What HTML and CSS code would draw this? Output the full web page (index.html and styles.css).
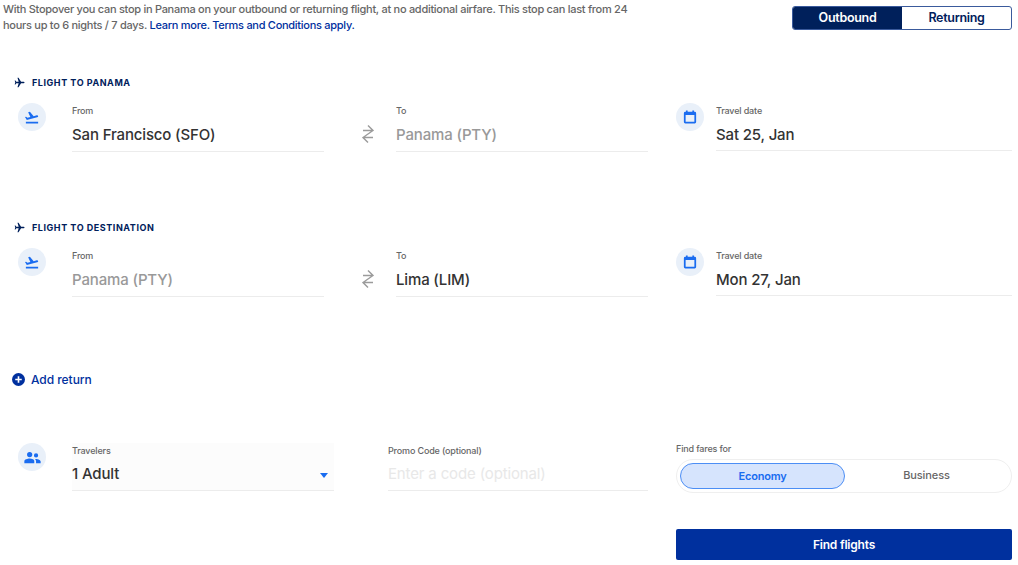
FILE: index.html
```html
<!DOCTYPE html>
<html lang="en">
<head>
  <meta charset="UTF-8" />
  <title>Stopover</title>
  <link rel="stylesheet" href="styles.css">
</head>
<body>
  <div class="top">
    <p class="intro">With Stopover you can stop in Panama on your outbound or returning flight, at no additional airfare. This stop can last from 24 hours up to 6 nights / 7 days. <a href="#">Learn more.</a> <a href="#">Terms and Conditions apply.</a></p>
    <div class="toggle">
      <div class="toggle-item active">Outbound</div>
      <div class="toggle-item">Returning</div>
    </div>
  </div>

  <section class="leg leg-first">
    <h3 class="leg-title">
      <svg width="11" height="11" viewBox="0 0 24 24"><path fill="#00205b" d="M23 12c0-1.100-.9-1.900-2-1.900h-5.600L9.900 1.500H7.600l2.600 8.600H5L3.200 7.800H1.500L2.700 12 1.500 16.200h1.700L5 13.900h5.200l-2.600 8.600h2.300l5.500-8.600H21c1.100 0 2-.8 2-1.900z"/></svg>
      FLIGHT TO PANAMA
    </h3>
    <div class="row">
      <div class="circle">
        <svg width="14" height="14" viewBox="0 0 24 24"><path fill="#1a6cf0" d="M1.500 20h21v3h-21v-3zM22.600 10.500c-.3-1.100-1.400-1.700-2.400-1.400l-5.400 1.400L8.400 3l-3 .8 3.800 8.100-5.100 1.400-2.200-1.800-2 .5 3.200 5.300 17.600-4.700c1.200-.3 2-1 1.900-2.100z"/></svg>
      </div>
      <div class="field field-from">
        <label>From</label>
        <div class="value">San Francisco (SFO)</div>
      </div>
      <div class="swap">
        <svg width="14" height="20" viewBox="0 0 14 20" fill="none" stroke="#9b9b9b" stroke-width="1.400"><path d="M7 1.500l5 5-10 7 5 5M2 6.500h10M2 13.500h10"/></svg>
      </div>
      <div class="field field-to">
        <label>To</label>
        <div class="value muted">Panama (PTY)</div>
      </div>
      <div class="circle circle-date">
        <svg width="14" height="14" viewBox="0 0 24 24"><path fill="#1a6cf0" d="M20 3h-1V1h-3v2H8V1H5v2H4a2.500 2.500 0 0 0-2.500 2.500v15A2.500 2.500 0 0 0 4 23h16a2.500 2.500 0 0 0 2.500-2.500v-15A2.500 2.500 0 0 0 20 3zm-.5 17h-15V8.500h15V20z"/></svg>
      </div>
      <div class="field field-date">
        <label>Travel date</label>
        <div class="value">Sat 25, Jan</div>
      </div>
    </div>
  </section>

  <section class="leg">
    <h3 class="leg-title">
      <svg width="11" height="11" viewBox="0 0 24 24"><path fill="#00205b" d="M23 12c0-1.100-.9-1.900-2-1.900h-5.600L9.900 1.500H7.600l2.600 8.600H5L3.200 7.800H1.500L2.700 12 1.500 16.200h1.700L5 13.900h5.200l-2.600 8.600h2.300l5.500-8.600H21c1.100 0 2-.8 2-1.900z"/></svg>
      FLIGHT TO DESTINATION
    </h3>
    <div class="row">
      <div class="circle">
        <svg width="14" height="14" viewBox="0 0 24 24"><path fill="#1a6cf0" d="M1.500 20h21v3h-21v-3zM22.600 10.500c-.3-1.100-1.400-1.700-2.400-1.400l-5.400 1.400L8.400 3l-3 .8 3.800 8.100-5.100 1.400-2.200-1.800-2 .5 3.200 5.300 17.600-4.700c1.200-.3 2-1 1.900-2.100z"/></svg>
      </div>
      <div class="field field-from">
        <label>From</label>
        <div class="value muted">Panama (PTY)</div>
      </div>
      <div class="swap">
        <svg width="14" height="20" viewBox="0 0 14 20" fill="none" stroke="#9b9b9b" stroke-width="1.400"><path d="M7 1.500l5 5-10 7 5 5M2 6.500h10M2 13.500h10"/></svg>
      </div>
      <div class="field field-to">
        <label>To</label>
        <div class="value">Lima (LIM)</div>
      </div>
      <div class="circle circle-date">
        <svg width="14" height="14" viewBox="0 0 24 24"><path fill="#1a6cf0" d="M20 3h-1V1h-3v2H8V1H5v2H4a2.500 2.500 0 0 0-2.500 2.500v15A2.500 2.500 0 0 0 4 23h16a2.500 2.500 0 0 0 2.500-2.500v-15A2.500 2.500 0 0 0 20 3zm-.5 17h-15V8.500h15V20z"/></svg>
      </div>
      <div class="field field-date">
        <label>Travel date</label>
        <div class="value">Mon 27, Jan</div>
      </div>
    </div>
  </section>

  <div class="add-return">
    <svg width="13" height="13" viewBox="0 0 24 24"><circle cx="12" cy="12" r="12" fill="#00309e"/><path fill="#fff" d="M10.500 6h3v4.500H18v3h-4.500V18h-3v-4.500H6v-3h4.500z"/></svg>
    Add return
  </div>

  <div class="bottom">
    <div class="circle circle-travelers">
      <svg width="17" height="17" viewBox="0 0 24 24"><path fill="#1a6cf0" d="M8 11.500a3.700 3.700 0 1 0 0-7.400 3.700 3.700 0 0 0 0 7.400zM17 12a3 3 0 1 0 0-6 3 3 0 0 0 0 6zM8 13.500c-3 0-7.500 1.300-7.500 3.700V20h14v-2.800c0-1.200-.8-2.200-1.900-2.800-1.400-.6-3.200-.9-4.600-.9zM17 14c-.4 0-.9 0-1.500.1 1 .8 1.500 1.800 1.500 3.100V20h6.500v-2.500C23.500 15.200 19.200 14 17 14z"/></svg>
    </div>
    <div class="field field-travelers">
      <label>Travelers</label>
      <div class="value">1 Adult</div>
      <span class="caret"></span>
    </div>
    <div class="field field-promo">
      <label>Promo Code (optional)</label>
      <div class="value placeholder">Enter a code (optional)</div>
    </div>
    <div class="fares">
      <label>Find fares for</label>
      <div class="fare-switch">
        <div class="fare active">Economy</div>
        <div class="fare">Business</div>
      </div>
      <button class="find">Find flights</button>
    </div>
  </div>
</body>
</html>
```

FILE: styles.css
```css
* {
  box-sizing: border-box;
}
body {
  margin: 0;
  padding: 0 6px 0 0;
  height: 565px;
  overflow: hidden;
  background-color: white;
  color: #333;
  font-family: 'Inter', sans-serif;
}
.top {
  display: flex;
  justify-content: space-between;
  align-items: flex-start;
  padding: 1px 0 0 3px;
}
.intro {
  width: 640px;
  margin: 0;
  font-size: 11px;
  letter-spacing: -0.28px;
  line-height: 16px;
  font-weight: 500;
  color: #666;
}
.intro a {
  color: #00309e;
  text-decoration: none;
}
.toggle {
  display: flex;
  width: 220px;
  height: 24px;
  margin-top: 5px;
  border: 1px solid #3a5a9c;
  border-radius: 3px;
  overflow: hidden;
}
.toggle-item {
  flex: 1;
  text-align: center;
  font-size: 12.5px;
  letter-spacing: -0.3px;
  font-weight: 600;
  line-height: 22px;
  color: #00205b;
}
.toggle-item.active {
  background-color: #00205b;
  color: white;
}
.leg {
  height: 145px;
}
.leg-first {
  margin-top: 41px;
}
.leg-title {
  display: flex;
  align-items: center;
  gap: 7px;
  height: 16px;
  margin: 0 0 15px 14px;
  font-size: 9px;
  font-weight: 700;
  letter-spacing: 0.55px;
  color: #00205b;
}
.row, .bottom {
  display: flex;
  align-items: flex-start;
}
.row {
  padding-left: 18px;
}
.circle {
  flex: none;
  display: flex;
  align-items: center;
  justify-content: center;
  width: 28px;
  height: 28px;
  margin-top: -2px;
  border-radius: 50%;
  background-color: #e9f0f9;
}
.field {
  position: relative;
  height: 47px;
  border-bottom: 1px solid #ececec;
}
.field label, .fares label {
  display: block;
  font-size: 9px;
  letter-spacing: -0.15px;
  line-height: 12px;
  font-weight: 500;
  color: #666;
}
.value {
  margin-top: 6px;
  font-size: 15px;
  letter-spacing: -0.15px;
  line-height: 24px;
  font-weight: 500;
  color: #333;
}
.value.muted {
  color: #999;
}
.value.placeholder {
  color: #e8e8e8;
  font-weight: 400;
}
.field-from {
  width: 252px;
  margin-left: 26px;
}
.swap {
  flex: none;
  display: flex;
  justify-content: center;
  width: 72px;
  padding: 19px 0 0 16px;
}
.field-to {
  width: 252px;
}
.circle-date {
  margin-left: 28px;
}
.field-date {
  flex: 1;
  margin-left: 12px;
  height: 46px;
}
.add-return {
  display: flex;
  align-items: center;
  gap: 6px;
  height: 20px;
  margin: 5px 0 0 12px;
  font-size: 12px;
  letter-spacing: -0.05px;
  font-weight: 500;
  color: #00309e;
}
.bottom {
  margin-top: 56px;
  padding-left: 18px;
}
.circle-travelers {
  margin-top: -2px;
}
.field-travelers {
  width: 262px;
  margin: -2px 0 0 26px;
  padding-top: 2px;
  height: 48px;
  background-color: #fcfcfc;
}
.field-travelers .value {
  margin-top: 5px;
}
.caret {
  position: absolute;
  right: 6px;
  top: 30px;
  border-left: 4.5px solid transparent;
  border-right: 4.5px solid transparent;
  border-top: 5px solid #1a6cf0;
}
.field-promo {
  width: 260px;
  margin-left: 54px;
  height: 46px;
}
.field-promo .value {
  margin-top: 5px;
}
.fares {
  flex: 1;
  margin: -2px 0 0 28px;
}
.fare-switch {
  display: flex;
  height: 34px;
  margin-top: 4px;
  padding: 3px;
  border: 1px solid #efefef;
  border-radius: 17px;
}
.fare {
  flex: 1;
  text-align: center;
  font-size: 11px;
  letter-spacing: -0.1px;
  font-weight: 500;
  line-height: 25px;
  color: #666;
}
.fare.active {
  flex: none;
  width: 165px;
  line-height: 24px;
  letter-spacing: -0.2px;
  font-weight: 600;
  background-color: #d6e4fd;
  border: 1px solid #4c8ef5;
  border-radius: 14px;
  color: #1a6cf0;
}
.find {
  display: block;
  width: 100%;
  height: 31px;
  margin-top: 36px;
  border: none;
  border-radius: 2px;
  background-color: #00309e;
  color: white;
  font-family: inherit;
  font-size: 12px;
  letter-spacing: -0.2px;
  font-weight: 600;
}
```
